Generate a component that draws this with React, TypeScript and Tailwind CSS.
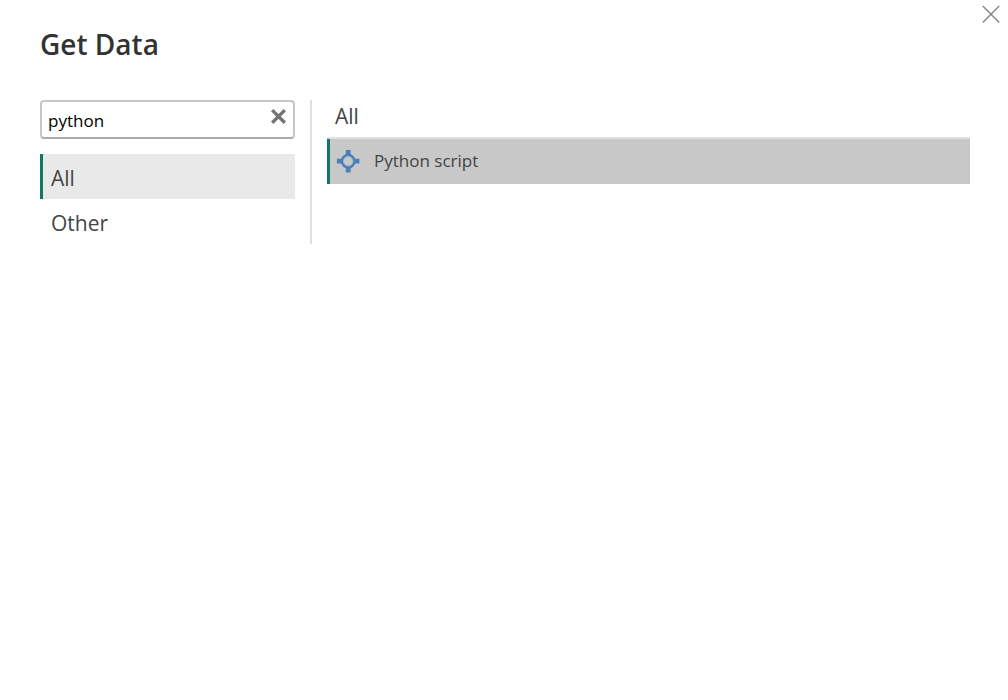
import { useState } from "react";

const categories = ["All", "Other"];
const connectors = [{ name: "Python script", category: "Other" }];

function CloseIcon() {
  return (
    <svg viewBox="0 0 18 18" className="size-[18px]" fill="none" stroke="#858585" strokeWidth="1.4" aria-hidden="true">
      <path d="M0.8 1.1L17.2 17.5M17.2 1.1L0.8 17.5" />
    </svg>
  );
}

function ClearIcon() {
  return (
    <svg viewBox="0 0 16 16" className="size-4" fill="none" stroke="#747474" strokeWidth="3.4" aria-hidden="true">
      <path d="M1.2 2.1L13.8 14.7M13.8 2.1L1.2 14.7" />
    </svg>
  );
}

function ConnectorIcon() {
  return (
    <svg viewBox="0 0 24 24" className="size-6 shrink-0" aria-hidden="true">
      <path d="M9.8 0.9h4.8v22.5H9.8zM0.9 9.8h22.5v4.8H0.9z" fill="#4a7fb8" />
      <circle cx="12.2" cy="12.2" r="7.4" fill="#4a7fb8" />
      <circle cx="12.2" cy="12.2" r="4.7" fill="#c8c8c8" stroke="#a3bbd5" strokeWidth="0.8" />
    </svg>
  );
}

export default function App() {
  const [query, setQuery] = useState("python");
  const [category, setCategory] = useState("All");
  const [selected, setSelected] = useState("Python script");

  const results = connectors.filter(
    (c) =>
      (category === "All" || c.category === category) &&
      c.name.toLowerCase().includes(query.toLowerCase()),
  );

  return (
    <main className="relative min-h-screen bg-white pt-6 pr-[38px] pl-10 font-['Open_Sans','Noto_Sans',sans-serif] text-[#444444]">
      <button type="button" aria-label="Close" className="absolute top-[5px] right-2">
        <CloseIcon />
      </button>

      <h1 className="text-[28px] leading-10 font-semibold text-[#333333]">Get Data</h1>

      <div className="mt-9 flex gap-[15px]">
        <aside className="w-[272px] shrink-0 border-r-2 border-[#e0e0e0] pr-[15px]">
          <div className="flex h-[39px] items-start rounded border-2 border-[#c6c6c6] border-b-[#ababab] px-1.5">
            <input
              type="text"
              aria-label="Search"
              value={query}
              onChange={(e) => setQuery(e.target.value)}
              className="h-9 min-w-0 flex-1 text-[17px] leading-6 text-black outline-none"
            />
            <button type="button" aria-label="Clear search" onClick={() => setQuery("")} className="mt-1.5">
              <ClearIcon />
            </button>
          </div>

          <nav aria-label="Categories" className="mt-[15px] flex flex-col">
            {categories.map((name) => (
              <button
                key={name}
                type="button"
                aria-pressed={category === name}
                onClick={() => setCategory(name)}
                className="h-[45px] border-l-3 border-transparent pt-0.5 pl-2 text-left text-[21px] leading-8 aria-pressed:border-[#117865] aria-pressed:bg-[#e9e9e9]"
              >
                {name}
              </button>
            ))}
          </nav>
        </aside>

        <section className="min-w-0 flex-1">
          <h2 className="h-[39px] border-b-2 border-[#e0e0e0] pl-2 text-[21px] leading-8">{category}</h2>
          <ul>
            {results.map(({ name }) => (
              <li key={name}>
                <button
                  type="button"
                  aria-pressed={selected === name}
                  onClick={() => setSelected(name)}
                  className="flex h-[45px] w-full items-center gap-3.5 border-l-3 border-transparent pb-0.5 pl-1.5 text-left text-[17px] leading-6 aria-pressed:border-[#117865] aria-pressed:bg-[#c8c8c8]"
                >
                  <ConnectorIcon />
                  {name}
                </button>
              </li>
            ))}
          </ul>
        </section>
      </div>
    </main>
  );
}
